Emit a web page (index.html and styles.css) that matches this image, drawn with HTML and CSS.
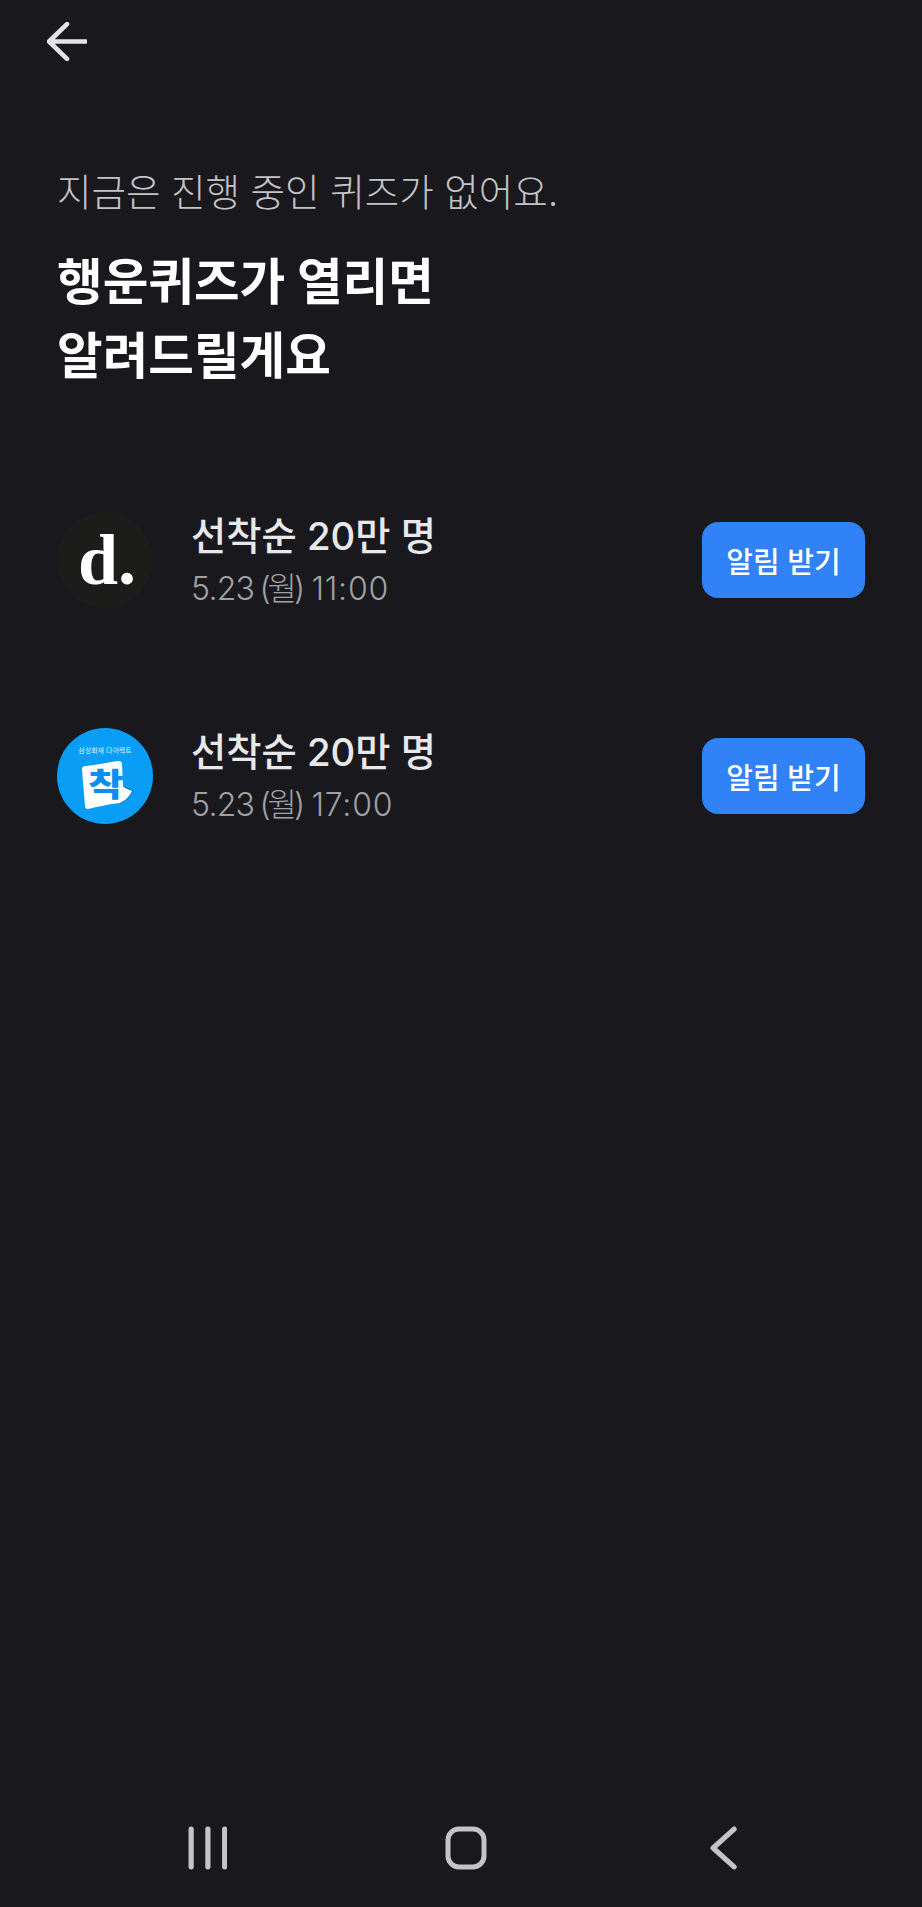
FILE: index.html
```html
<!DOCTYPE html>
<html lang="ko">
<head>
<meta charset="utf-8">
<title>행운퀴즈</title>
<link rel="stylesheet" href="styles.css">
</head>
<body>
<div class="page">
  <header class="topbar">
    <svg class="back-arrow" viewBox="0 0 39 38" aria-hidden="true"><path d="M37.5 19H2.5M19.5 2 2 19l17.5 17"/></svg>
  </header>
  <main class="content">
    <p class="sub">지금은 진행 중인 퀴즈가 없어요.</p>
    <h1 class="title">행운퀴즈가 열리면<br>알려드릴게요</h1>
    <ul class="quiz-list">
      <li class="quiz">
        <div class="logo logo-d"><span>d.</span></div>
        <div class="info">
          <div class="name">선착순 20만 명</div>
          <div class="time">5.23 <span class="day">(월)</span> <span class="clock">11:00</span></div>
        </div>
        <button class="notify">알림 받기</button>
      </li>
      <li class="quiz">
        <div class="logo logo-c">
          <svg viewBox="0 0 96 96" class="logo-art" aria-hidden="true">
            <text x="48" y="25" class="logo-small">삼성화재 다이렉트</text>
            <path class="sheet-shadow" d="M66 58c3 1 7 3 10 5-3 6-8 11-13 13 2-6 4-12 3-18z"/>
            <path class="sheet" d="M29 38c10-1 24-4 32-5 3 0 4 1 4 3l1 22c1 2 5 3 9 5-3 7-8 10-12 12-11 1-23 4-32 6-2 0-3-1-3-3l-3-36c0-3 1-4 4-4z"/>
            <text x="0" y="0" class="logo-big" transform="translate(49 68) scale(1.2 1)">착</text>
          </svg>
        </div>
        <div class="info">
          <div class="name">선착순 20만 명</div>
          <div class="time">5.23 <span class="day">(월)</span> <span class="clock">17:00</span></div>
        </div>
        <button class="notify">알림 받기</button>
      </li>
    </ul>
  </main>
  <nav class="navbar">
    <svg class="nav-icon" viewBox="0 0 38 42" aria-hidden="true"><path d="M3 3v36M19 3v36M35 3v36"/></svg>
    <svg class="nav-icon" viewBox="0 0 42 44" aria-hidden="true"><rect x="3" y="3" width="36" height="38" rx="11"/></svg>
    <svg class="nav-icon" viewBox="0 0 26 42" aria-hidden="true"><path d="M23 3 3 21l20 18"/></svg>
  </nav>
</div>
</body>
</html>
```
FILE: styles.css
```css
* { box-sizing: border-box; }
html, body { margin: 0; padding: 0; }
body {
  background: #18181d;
  font-family: Inter, "Noto Sans CJK KR", sans-serif;
}
.page {
  display: flex;
  flex-direction: column;
  height: 1907px;
}
.topbar {
  display: flex;
  align-items: flex-start;
  padding: 22px 0 0 47px;
  height: 160px;
}
.back-arrow {
  width: 40px;
  height: 39px;
  fill: none;
  stroke: #e4e4e6;
  stroke-width: 4.5;
  stroke-linecap: round;
  stroke-linejoin: round;
}
.content {
  flex: 1;
  padding: 0 57px;
}
.sub {
  margin: 0;
  font-size: 37.5px;
  line-height: 66px;
  font-weight: 300;
  color: #c4c4c8;
}
.title {
  margin: 19px 0 0;
  font-size: 49.6px;
  line-height: 74px;
  font-weight: 700;
  color: #ffffff;
}
.quiz-list {
  list-style: none;
  margin: 119px 0 0;
  padding: 0;
  display: flex;
  flex-direction: column;
  gap: 120px;
}
.quiz {
  display: flex;
  align-items: center;
  height: 96px;
}
.logo {
  flex: none;
  width: 96px;
  height: 96px;
  border-radius: 50%;
  display: flex;
  align-items: center;
  justify-content: center;
  overflow: hidden;
}
.logo-d {
  background: #1c1c1b;
  color: #ffffff;
  font-family: "Liberation Serif", serif;
  font-weight: 700;
  font-size: 72px;
  line-height: 1;
  padding-left: 4px;
}
.logo-c { background: #0a9df5; }
.logo-art { width: 96px; height: 96px; display: block; }
.logo-small {
  font-size: 7px;
  fill: #d8f0ff;
  text-anchor: middle;
}
.sheet { fill: #ffffff; }
.sheet-shadow { fill: #0567a8; }
.logo-big {
  font-family: "Noto Sans CJK KR", sans-serif;
  font-size: 32px;
  font-weight: 900;
  fill: #0a90ee;
  text-anchor: middle;
}
.info {
  flex: 1;
  margin-left: 38px;
}
.name {
  font-size: 38.3px;
  line-height: 48px;
  font-weight: 500;
  color: #e8e8ea;
}
.time {
  margin-top: 9px;
  font-size: 32px;
  line-height: 40px;
  font-weight: 300;
  letter-spacing: -0.75px;
  word-spacing: -3px;
  color: #a0a0a5;
}
.day { letter-spacing: -3px; }
.clock {
  letter-spacing: 0.75px;
  margin-left: 4px;
}
.notify {
  flex: none;
  width: 163px;
  height: 76px;
  border: 0;
  border-radius: 16px;
  background: #3182f6;
  color: #ffffff;
  font-family: inherit;
  font-size: 29px;
  font-weight: 500;
  padding: 0;
}
.navbar {
  display: grid;
  grid-template-columns: repeat(3, 258px);
  justify-items: center;
  align-items: center;
  padding: 0 0 37px 78.5px;
}
.nav-icon {
  height: 44px;
  fill: none;
  stroke: #c4c4c6;
  stroke-width: 5;
  stroke-linecap: round;
  stroke-linejoin: round;
}
```
